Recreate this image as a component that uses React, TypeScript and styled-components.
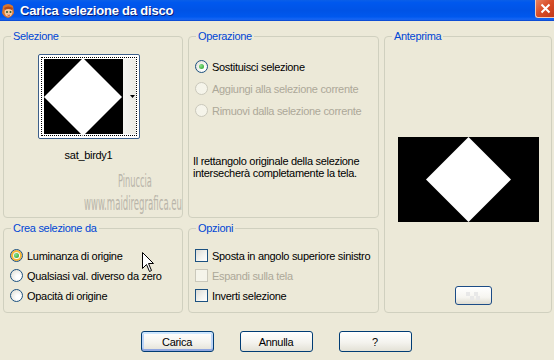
import React from 'react';
import styled, { createGlobalStyle, css } from 'styled-components';

const GlobalStyle = createGlobalStyle`
  html, body {
    margin: 0;
    padding: 0;
    background: #ece9d8;
  }
  body {
    font-family: Tahoma, "Liberation Sans", Arial, sans-serif;
    font-size: 11px;
    letter-spacing: -0.3px;
    color: #000;
  }
`;

const Window = styled.div`
  width: 554px;
  height: 360px;
  background: #ece9d8;
  display: flex;
  flex-direction: column;
  overflow: hidden;
  position: relative;
`;

const TitleBar = styled.div`
  height: 21px;
  display: flex;
  align-items: center;
  padding-left: 1px;
  background: linear-gradient(
    to bottom,
    #0a5fe8 0%,
    #0058ee 12%,
    #0053e6 50%,
    #0058ee 80%,
    #1766f4 92%,
    #0842c8 100%
  );
`;

const TitleText = styled.div`
  flex: 1;
  margin-left: 5px;
  color: #fff;
  font-family: "Liberation Sans", Arial, sans-serif;
  font-weight: bold;
  font-size: 13px;
  letter-spacing: -0.2px;
  text-shadow: 1px 1px 0 #0a1e7a;
`;

const CloseButton = styled.div`
  width: 19px;
  height: 18px;
  margin-top: -3px;
  box-sizing: border-box;
  border-left: 1px solid #f0c8b8;
  border-bottom: 1px solid #f0c8b8;
  border-radius: 0 0 0 3px;
  background: linear-gradient(135deg, #e9815f 0%, #d84b25 50%, #c2381a 100%);
  display: flex;
  align-items: center;
  justify-content: center;
`;

const Body = styled.div`
  flex: 1;
  display: flex;
  flex-direction: column;
  padding: 9px 2px 0 3px;
`;

const Panels = styled.div`
  display: grid;
  grid-template-columns: 180px 191px 168px;
  grid-template-rows: 188px 91px;
  column-gap: 5px;
  row-gap: 4px;
`;

const Group = styled.fieldset<{ $span?: boolean }>`
  margin: 0;
  padding: 0 6px 6px;
  min-width: 0;
  border: 1px solid #d0d0bf;
  border-radius: 4px;
  box-sizing: border-box;
  display: flex;
  flex-direction: column;
  ${(p) =>
    p.$span &&
    css`
      grid-row: 1 / span 2;
      grid-column: 3;
    `}
`;

const Legend = styled.legend`
  color: #0046d5;
  padding: 0 2px;
  margin-left: 1px;
  line-height: 13px;
`;

const ThumbArea = styled.div`
  display: flex;
  flex-direction: column;
  align-items: center;
  padding-top: 11px;
  padding-right: 9px;
`;

const Thumb = styled.div`
  width: 102px;
  height: 85px;
  box-sizing: border-box;
  border: 1px solid #3c5f8a;
  border-radius: 2px;
  background: #fff;
  padding: 2px;
  display: flex;
`;

const ThumbInner = styled.div`
  flex: 1;
  border: 1px dotted #000;
  display: flex;
  padding: 1px 0 1px 2px;
`;

const ThumbImage = styled.div`
  width: 79px;
  background: #000;
  display: flex;
  align-items: center;
  justify-content: center;
`;

const ThumbStrip = styled.div`
  flex: 1;
  background: linear-gradient(to right, #f4f4f0, #ecebe4);
  display: flex;
  align-items: center;
  justify-content: flex-end;
  padding-right: 1px;
`;

const ThumbName = styled.div`
  margin-top: 10px;
`;

const Watermark = styled.div`
  display: flex;
  flex-direction: column;
  align-items: flex-end;
  margin-top: 12px;
  margin-right: -6px;
  color: #b9b5aa;
  font-family: "DejaVu Sans Condensed", "Liberation Sans Narrow", sans-serif;
  font-weight: 200;
  letter-spacing: 0;
  line-height: 1;
  white-space: nowrap;
`;

const WatermarkTop = styled.div`
  font-size: 17px;
  transform: scaleX(0.54);
  transform-origin: right;
  margin-right: 30px;
`;

const WatermarkBottom = styled.div`
  font-size: 19px;
  transform: scaleX(0.5);
  transform-origin: right;
  margin-top: 4px;
`;

const OptionList = styled.div<{ $top: number; $gap: number }>`
  display: flex;
  flex-direction: column;
  gap: ${(p) => p.$gap}px;
  padding-top: ${(p) => p.$top}px;
`;

const Option = styled.label<{ $disabled?: boolean }>`
  display: flex;
  align-items: center;
  gap: 4px;
  height: 13px;
  white-space: nowrap;
  color: ${(p) => (p.$disabled ? '#aca899' : '#000')};
`;

const Radio = styled.span<{ $checked?: boolean; $disabled?: boolean; $hover?: boolean }>`
  width: 13px;
  height: 13px;
  box-sizing: border-box;
  border-radius: 50%;
  border: 1px solid ${(p) => (p.$disabled ? '#cac8bb' : '#1c5180')};
  background: ${(p) =>
    p.$disabled ? '#f5f4ea' : 'radial-gradient(circle at 65% 65%, #fff 20%, #dcd9cd 100%)'};
  display: flex;
  align-items: center;
  justify-content: center;
  flex-shrink: 0;
  ${(p) =>
    p.$hover &&
    css`
      box-shadow: inset 0 0 0 2px #f8b636;
    `}
  &::after {
    content: '';
    display: ${(p) => (p.$checked ? 'block' : 'none')};
    width: 5px;
    height: 5px;
    border-radius: 50%;
    background: radial-gradient(circle at 35% 35%, #8de08d, #21a121);
  }
`;

const Check = styled.span<{ $disabled?: boolean }>`
  width: 13px;
  height: 13px;
  box-sizing: border-box;
  border: 1px solid ${(p) => (p.$disabled ? '#cac8bb' : '#1c5180')};
  background: ${(p) =>
    p.$disabled ? '#f5f4ea' : 'linear-gradient(135deg, #dcdcd7 0%, #f4f4f0 60%, #fff 100%)'};
  flex-shrink: 0;
`;

const Note = styled.div`
  margin-top: 38px;
  margin-left: -2px;
  line-height: 12px;
  white-space: nowrap;
`;

const PreviewArea = styled.div`
  flex: 1;
  display: flex;
  flex-direction: column;
  align-items: center;
  padding-top: 94px;
`;

const Preview = styled.div`
  width: 141px;
  height: 85px;
  background: #000;
  display: flex;
  align-items: center;
  justify-content: center;
`;

const SmallButton = styled.div`
  margin-top: 64px;
  margin-left: 10px;
  width: 37px;
  height: 19px;
  box-sizing: border-box;
  border: 1px solid #1c4c86;
  border-radius: 3px;
  background: linear-gradient(to bottom, #fff 0%, #f6f5f0 60%, #dedcd1 100%);
  display: flex;
  align-items: center;
  justify-content: center;
`;

const ButtonRow = styled.div`
  display: flex;
  justify-content: center;
  gap: 26px;
  margin-top: 18px;
  padding-right: 3px;
`;

const Button = styled.div<{ $default?: boolean }>`
  width: 73px;
  height: 21px;
  box-sizing: border-box;
  border: 1px solid #003c74;
  border-radius: 3px;
  background: linear-gradient(to bottom, #fff 0%, #f4f3ee 55%, #e3e1d6 100%);
  display: flex;
  align-items: center;
  justify-content: center;
  ${(p) =>
    p.$default &&
    css`
      box-shadow: inset 0 -2px 0 #91a7e0, inset 0 2px 0 #cee7ff, inset 2px 0 0 #bcd4f6,
        inset -2px 0 0 #bcd4f6;
    `}
`;

const Cursor = styled.svg`
  position: absolute;
  left: 142px;
  top: 252px;
`;

function Diamond({ size }: { size: number }) {
  const h = size / 2;
  return (
    <svg width={size} height={size} viewBox={`0 0 ${size} ${size}`}>
      <polygon points={`${h},0 ${size},${h} ${h},${size} 0,${h}`} fill="#fff" />
    </svg>
  );
}

function AppIcon() {
  return (
    <svg width="14" height="16" viewBox="0 0 14 16">
      <path d="M2 3 Q7 -1 12 3 L13 10 Q11 14 7 15 Q3 14 1 10 Z" fill="#d9742c" />
      <ellipse cx="7.5" cy="9" rx="4" ry="4.5" fill="#f6c9a0" />
      <path d="M3 5 Q7 2 12 5 L11 7 Q7 5 4 7 Z" fill="#b44a18" />
      <circle cx="6" cy="9" r="1" fill="#2a5a2a" />
      <circle cx="9.5" cy="9" r="1" fill="#2a5a2a" />
      <path d="M6.5 12 Q8 13 9 12" stroke="#c03020" strokeWidth="0.8" fill="none" />
    </svg>
  );
}

export default function App() {
  return (
    <>
      <GlobalStyle />
      <Window>
        <TitleBar>
          <AppIcon />
          <TitleText>Carica selezione da disco</TitleText>
          <CloseButton>
            <svg width="11" height="11" viewBox="0 0 11 11">
              <path d="M1.5 1.5 L9.5 9.5 M9.5 1.5 L1.5 9.5" stroke="#fff" strokeWidth="2" />
            </svg>
          </CloseButton>
        </TitleBar>
        <Body>
          <Panels>
            <Group>
              <Legend>Selezione</Legend>
              <ThumbArea>
                <Thumb>
                  <ThumbInner>
                    <ThumbImage>
                      <Diamond size={78} />
                    </ThumbImage>
                    <ThumbStrip>
                      <svg width="5" height="3" viewBox="0 0 5 3">
                        <polygon points="0,0 5,0 2.5,3" fill="#000" />
                      </svg>
                    </ThumbStrip>
                  </ThumbInner>
                </Thumb>
                <ThumbName>sat_birdy1</ThumbName>
              </ThumbArea>
              <Watermark>
                <WatermarkTop>Pinuccia</WatermarkTop>
                <WatermarkBottom>www.maidiregrafica.eu</WatermarkBottom>
              </Watermark>
            </Group>

            <Group>
              <Legend>Operazione</Legend>
              <OptionList $top={17} $gap={9}>
                <Option>
                  <Radio $checked />
                  Sostituisci selezione
                </Option>
                <Option $disabled>
                  <Radio $disabled />
                  Aggiungi alla selezione corrente
                </Option>
                <Option $disabled>
                  <Radio $disabled />
                  Rimuovi dalla selezione corrente
                </Option>
              </OptionList>
              <Note>
                Il rettangolo originale della selezione
                <br />
                intersecherà completamente la tela.
              </Note>
            </Group>

            <Group $span>
              <Legend>Anteprima</Legend>
              <PreviewArea>
                <Preview>
                  <Diamond size={85} />
                </Preview>
                <SmallButton>
                  <svg width="14" height="8" viewBox="0 0 14 8">
                    <rect x="0" y="0" width="4" height="4" fill="#e8e8e8" />
                    <rect x="8" y="0" width="4" height="4" fill="#e8e8e8" />
                    <rect x="4" y="4" width="4" height="4" fill="#e8e8e8" />
                    <rect x="10" y="4" width="4" height="4" fill="#e8e8e8" />
                  </svg>
                </SmallButton>
              </PreviewArea>
            </Group>

            <Group>
              <Legend>Crea selezione da</Legend>
              <OptionList $top={14} $gap={7}>
                <Option>
                  <Radio $checked $hover />
                  Luminanza di origine
                </Option>
                <Option>
                  <Radio />
                  Qualsiasi val. diverso da zero
                </Option>
                <Option>
                  <Radio />
                  Opacità di origine
                </Option>
              </OptionList>
            </Group>

            <Group>
              <Legend>Opzioni</Legend>
              <OptionList $top={14} $gap={7}>
                <Option>
                  <Check />
                  Sposta in angolo superiore sinistro
                </Option>
                <Option $disabled>
                  <Check $disabled />
                  Espandi sulla tela
                </Option>
                <Option>
                  <Check />
                  Inverti selezione
                </Option>
              </OptionList>
            </Group>
          </Panels>

          <ButtonRow>
            <Button $default>Carica</Button>
            <Button>Annulla</Button>
            <Button>?</Button>
          </ButtonRow>
        </Body>
        <Cursor width="13" height="21" viewBox="0 0 13 21">
          <path
            d="M0.5 0.5 L0.5 16.5 L4.5 12.5 L7.5 19.5 L9.5 18.5 L6.5 11.5 L11.5 11.5 Z"
            fill="#fff"
            stroke="#000"
            strokeWidth="1"
          />
        </Cursor>
      </Window>
    </>
  );
}
